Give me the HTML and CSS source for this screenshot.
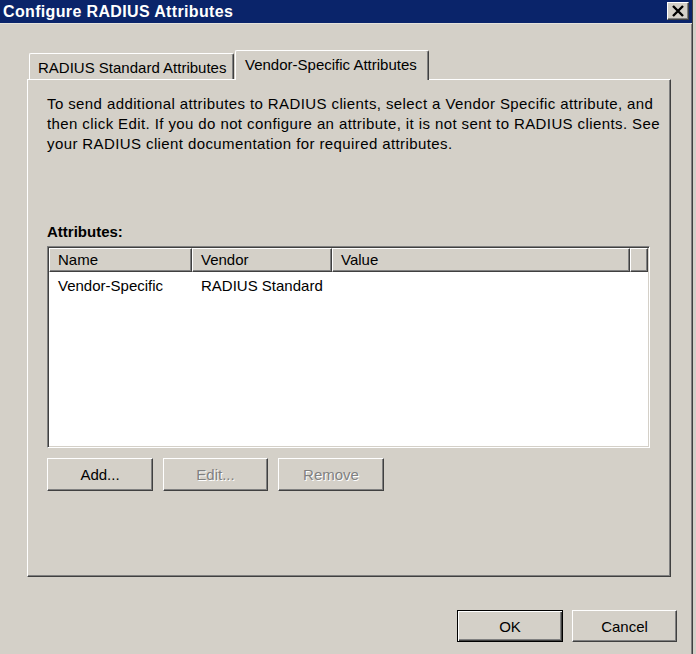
FILE: index.html
```html
<!DOCTYPE html>
<html>
<head>
<meta charset="utf-8">
<link rel="stylesheet" href="styles.css">
</head>
<body>
<div class="window">
  <div class="titlebar">
    <span class="title">Configure RADIUS Attributes</span>
    <div class="close">
      <svg width="14" height="12" viewBox="0 0 14 12"><path d="M2 1 L12 11 M12 1 L2 11" stroke="#000" stroke-width="2.4" fill="none"/></svg>
    </div>
  </div>
  <div class="body">
    <div class="tabs">
      <div class="tab tab-std">RADIUS Standard Attributes</div>
      <div class="tab tab-active">Vendor-Specific Attributes</div>
    </div>
    <div class="panel">
      <p class="desc">To send additional attributes to RADIUS clients, select a Vendor Specific attribute, and<br>then click Edit. If you do not configure an attribute, it is not sent to RADIUS clients. See<br>your RADIUS client documentation for required attributes.</p>
      <div class="label">Attributes:</div>
      <div class="listview">
        <div class="lv-header">
          <div class="hcell c-name">Name</div>
          <div class="hcell c-vendor">Vendor</div>
          <div class="hcell c-value">Value</div>
          <div class="hcell c-fill"></div>
        </div>
        <div class="lv-row">
          <div class="cell c-name">Vendor-Specific</div>
          <div class="cell c-vendor">RADIUS Standard</div>
          <div class="cell c-value"></div>
        </div>
      </div>
      <div class="btn-row">
        <div class="btn w106">Add...</div>
        <div class="btn w105 disabled">Edit...</div>
        <div class="btn w106 disabled">Remove</div>
      </div>
    </div>
    <div class="footer">
      <div class="btn w106 default">OK</div>
      <div class="btn w105">Cancel</div>
    </div>
  </div>
</div>
</body>
</html>
```
FILE: styles.css
```css
html, body {
  margin: 0;
  padding: 0;
  background: #d4d0c8;
}
body {
  font-family: "Liberation Sans", Arial, sans-serif;
  font-size: 15px;
  color: #000;
}
.window {
  width: 692px;
  height: 654px;
  background: #d4d0c8;
  border-right: 1px solid #404040;
  box-shadow: inset -1px 0 0 #808080;
  display: flex;
  flex-direction: column;
}
.titlebar {
  height: 23px;
  background: #0a246a;
  border-bottom: 1px solid #e4e2dc;
  display: flex;
  align-items: center;
  justify-content: space-between;
  padding-left: 3px;
}
.title {
  color: #fff;
  font-weight: bold;
  font-size: 16px;
  letter-spacing: 0.35px;
}
.close {
  width: 20px;
  height: 16px;
  margin-right: 3px;
  margin-top: -2px;
  background: #d4d0c8;
  border-top: 1px solid #fff;
  border-left: 1px solid #fff;
  border-right: 1px solid #404040;
  border-bottom: 1px solid #404040;
  box-shadow: inset -1px -1px 0 #808080;
  display: flex;
  align-items: center;
  justify-content: center;
}
.body {
  flex: 1;
  display: flex;
  flex-direction: column;
}
.tabs {
  margin-top: 26px;
  height: 29px;
  padding-left: 29px;
  display: flex;
  align-items: flex-end;
  position: relative;
  z-index: 1;
}
.tab {
  box-sizing: border-box;
  border-top: 1px solid #fff;
  border-left: 1px solid #fff;
  border-right: 1px solid #404040;
  box-shadow: inset -1px 0 0 #808080;
  border-top-left-radius: 2px;
  border-top-right-radius: 2px;
  background: #d4d0c8;
  display: flex;
  align-items: center;
}
.tab-std {
  width: 205px;
  height: 26px;
  padding-left: 8px;
  padding-top: 2px;
}
.tab-active {
  width: 194px;
  height: 30px;
  margin-left: 1px;
  margin-bottom: -1px;
  padding-left: 9px;
  padding-bottom: 3px;
}
.panel {
  margin-left: 27px;
  width: 644px;
  height: 498px;
  box-sizing: border-box;
  border-top: 1px solid #fff;
  border-left: 1px solid #fff;
  border-right: 1px solid #404040;
  border-bottom: 1px solid #404040;
  box-shadow: inset -1px -1px 0 #808080;
  padding: 14px 20px 0 19px;
}
.desc {
  margin: 0;
  line-height: 20px;
  white-space: nowrap;
  letter-spacing: 0.4px;
}
.label {
  margin-top: 68px;
  font-weight: bold;
  line-height: 20px;
}
.listview {
  margin-top: 4px;
  width: 603px;
  height: 202px;
  box-sizing: border-box;
  border-top: 1px solid #808080;
  border-left: 1px solid #808080;
  border-right: 1px solid #fff;
  border-bottom: 1px solid #fff;
  box-shadow: inset 1px 1px 0 #404040, inset -1px -1px 0 #d4d0c8;
  background: #fff;
  padding: 1px;
}
.lv-header {
  display: flex;
  height: 24px;
}
.hcell {
  box-sizing: border-box;
  height: 24px;
  background: #d4d0c8;
  border-top: 1px solid #fff;
  border-left: 1px solid #fff;
  border-right: 1px solid #404040;
  border-bottom: 1px solid #404040;
  box-shadow: inset -1px -1px 0 #808080;
  padding-left: 8px;
  line-height: 22px;
}
.c-name { width: 143px; }
.c-vendor { width: 140px; }
.c-value { width: 298px; }
.c-fill { flex: 1; }
.lv-row {
  display: flex;
  height: 26px;
  align-items: center;
}
.cell {
  padding-left: 9px;
  box-sizing: border-box;
}
.btn-row {
  margin-top: 10px;
  display: flex;
  gap: 10px;
}
.btn {
  box-sizing: border-box;
  height: 33px;
  background: #d4d0c8;
  border-top: 1px solid #fff;
  border-left: 1px solid #fff;
  border-right: 1px solid #404040;
  border-bottom: 1px solid #404040;
  box-shadow: inset -1px -1px 0 #808080;
  display: flex;
  align-items: center;
  justify-content: center;
}
.w106 { width: 106px; }
.w105 { width: 105px; }
.disabled {
  color: #808080;
  text-shadow: 1px 1px 0 #fff;
}
.footer {
  margin-top: 33px;
  display: flex;
  justify-content: flex-end;
  gap: 9px;
  padding-right: 15px;
}
.footer .btn {
  height: 32px;
}
.default {
  border: 1px solid #000;
  box-shadow: inset 1px 1px 0 #fff, inset -1px -1px 0 #404040, inset -2px -2px 0 #808080;
}
```
